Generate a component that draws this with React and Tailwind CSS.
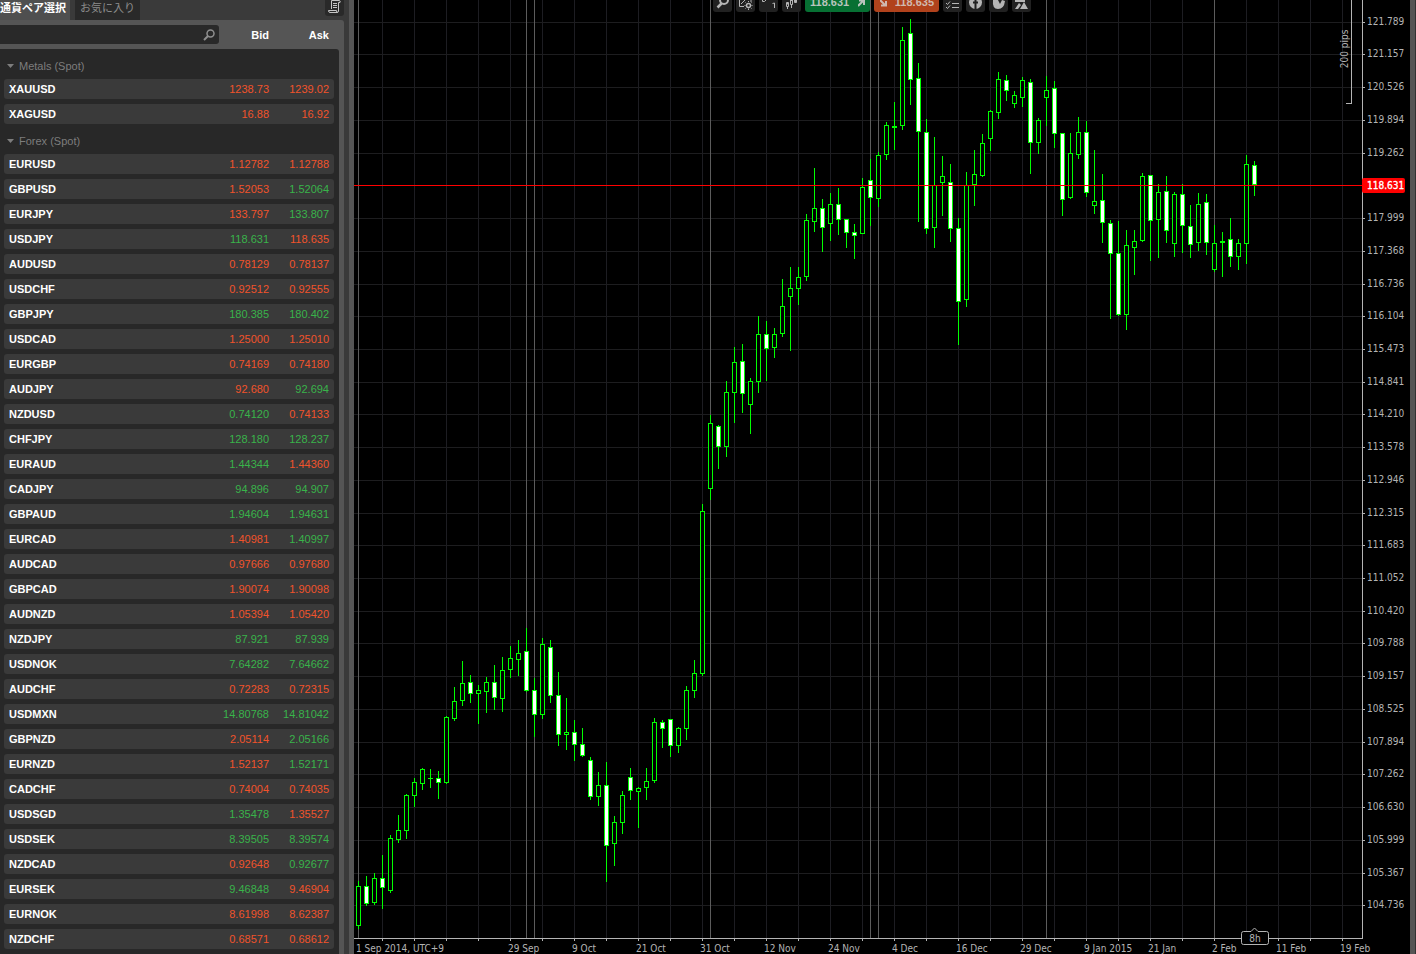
import { useState } from 'react'

const METALS = [
  ['XAUUSD', '1238.73', 'down', '1239.02', 'down'],
  ['XAGUSD', '16.88', 'down', '16.92', 'down'],
]

const FOREX = [
  ['EURUSD', '1.12782', 'down', '1.12788', 'down'],
  ['GBPUSD', '1.52053', 'down', '1.52064', 'up'],
  ['EURJPY', '133.797', 'down', '133.807', 'up'],
  ['USDJPY', '118.631', 'up', '118.635', 'down'],
  ['AUDUSD', '0.78129', 'down', '0.78137', 'down'],
  ['USDCHF', '0.92512', 'down', '0.92555', 'down'],
  ['GBPJPY', '180.385', 'up', '180.402', 'up'],
  ['USDCAD', '1.25000', 'down', '1.25010', 'down'],
  ['EURGBP', '0.74169', 'down', '0.74180', 'down'],
  ['AUDJPY', '92.680', 'down', '92.694', 'up'],
  ['NZDUSD', '0.74120', 'up', '0.74133', 'down'],
  ['CHFJPY', '128.180', 'up', '128.237', 'up'],
  ['EURAUD', '1.44344', 'up', '1.44360', 'down'],
  ['CADJPY', '94.896', 'up', '94.907', 'up'],
  ['GBPAUD', '1.94604', 'up', '1.94631', 'up'],
  ['EURCAD', '1.40981', 'down', '1.40997', 'up'],
  ['AUDCAD', '0.97666', 'down', '0.97680', 'down'],
  ['GBPCAD', '1.90074', 'down', '1.90098', 'down'],
  ['AUDNZD', '1.05394', 'down', '1.05420', 'down'],
  ['NZDJPY', '87.921', 'up', '87.939', 'up'],
  ['USDNOK', '7.64282', 'up', '7.64662', 'up'],
  ['AUDCHF', '0.72283', 'down', '0.72315', 'down'],
  ['USDMXN', '14.80768', 'up', '14.81042', 'up'],
  ['GBPNZD', '2.05114', 'down', '2.05166', 'up'],
  ['EURNZD', '1.52137', 'down', '1.52171', 'up'],
  ['CADCHF', '0.74004', 'down', '0.74035', 'down'],
  ['USDSGD', '1.35478', 'up', '1.35527', 'down'],
  ['USDSEK', '8.39505', 'up', '8.39574', 'up'],
  ['NZDCAD', '0.92648', 'down', '0.92677', 'up'],
  ['EURSEK', '9.46848', 'up', '9.46904', 'down'],
  ['EURNOK', '8.61998', 'down', '8.62387', 'down'],
  ['NZDCHF', '0.68571', 'down', '0.68612', 'down'],
]

// high, body top, body bottom, low, falling (1 = filled body)
const CANDLES = [
  [881, 886, 926, 929, 0], [876, 886, 904, 906, 1], [873, 878, 903, 905, 0], [855, 878, 888, 909, 1],
  [835, 838, 891, 893, 0], [815, 830, 840, 843, 0], [794, 795, 831, 839, 0], [778, 782, 796, 807, 0],
  [768, 769, 784, 790, 0], [769, 778, 779, 788, 0], [771, 778, 783, 799, 1], [716, 717, 783, 784, 0],
  [687, 701, 719, 721, 0], [661, 683, 701, 706, 0], [675, 682, 694, 703, 1], [685, 690, 694, 724, 0],
  [677, 682, 692, 713, 0], [665, 682, 698, 710, 1], [657, 670, 699, 712, 0], [646, 658, 670, 678, 0],
  [640, 653, 660, 676, 0], [628, 651, 691, 692, 1], [678, 690, 715, 737, 1], [638, 644, 715, 719, 0],
  [640, 647, 696, 703, 1], [672, 695, 735, 746, 1], [698, 732, 735, 750, 0], [720, 732, 745, 761, 1],
  [728, 744, 756, 757, 1], [757, 760, 797, 800, 1], [772, 785, 797, 806, 0], [762, 785, 846, 882, 1],
  [816, 822, 844, 866, 0], [791, 795, 823, 834, 0], [768, 777, 791, 800, 1], [787, 788, 792, 828, 0],
  [768, 781, 788, 800, 0], [718, 722, 781, 783, 0], [720, 722, 729, 748, 1], [719, 719, 746, 757, 1],
  [727, 728, 746, 753, 0], [686, 690, 729, 740, 0], [660, 673, 691, 698, 0], [504, 511, 674, 676, 0],
  [415, 423, 489, 500, 0], [425, 426, 447, 469, 1], [381, 392, 447, 457, 0], [347, 362, 393, 423, 0],
  [344, 361, 394, 413, 1], [378, 381, 405, 434, 0], [316, 334, 382, 393, 0], [321, 334, 349, 381, 1],
  [328, 334, 348, 358, 0], [279, 306, 334, 337, 0], [267, 288, 297, 351, 0], [267, 277, 289, 305, 0],
  [214, 220, 277, 281, 0], [168, 208, 222, 232, 0], [199, 208, 228, 252, 1], [193, 204, 224, 241, 0],
  [188, 204, 220, 235, 1], [219, 219, 233, 248, 1], [224, 232, 236, 259, 1], [178, 187, 234, 234, 0],
  [159, 180, 198, 226, 1], [152, 155, 199, 207, 0], [122, 125, 155, 160, 0], [102, 126, 128, 150, 0],
  [27, 40, 126, 130, 0], [19, 33, 80, 105, 1], [63, 78, 132, 222, 1], [119, 132, 229, 234, 1],
  [137, 185, 228, 248, 0], [156, 176, 183, 216, 0], [164, 182, 229, 242, 1], [218, 228, 302, 345, 1],
  [172, 185, 300, 307, 0], [150, 174, 185, 206, 0], [134, 143, 176, 177, 0], [110, 111, 139, 151, 0],
  [72, 79, 113, 119, 0], [75, 80, 91, 101, 1], [91, 95, 104, 108, 0], [77, 80, 98, 107, 0],
  [79, 82, 143, 174, 1], [118, 120, 143, 154, 0], [76, 90, 98, 126, 0], [81, 88, 134, 148, 1],
  [133, 133, 200, 216, 1], [133, 153, 198, 199, 0], [117, 132, 155, 159, 0], [121, 132, 193, 197, 1],
  [150, 201, 206, 214, 0], [174, 200, 223, 243, 1], [220, 223, 254, 319, 1], [221, 253, 315, 316, 1],
  [230, 245, 315, 330, 0], [230, 241, 248, 275, 0], [173, 176, 241, 242, 0], [175, 175, 221, 261, 1],
  [184, 192, 220, 258, 0], [176, 191, 231, 243, 1], [192, 194, 244, 257, 0], [184, 194, 226, 253, 1],
  [205, 226, 245, 258, 1], [193, 204, 243, 251, 0], [194, 202, 243, 255, 1], [225, 243, 270, 272, 0],
  [232, 241, 243, 277, 0], [218, 239, 257, 267, 1], [239, 243, 257, 270, 0], [155, 164, 244, 264, 0],
  [161, 165, 185, 196, 1],
]

const PRICES = [
  [22, '121.789'], [54, '121.157'], [87, '120.526'], [120, '119.894'], [153, '119.262'],
  [218, '117.999'], [251, '117.368'], [284, '116.736'], [316, '116.104'], [349, '115.473'],
  [382, '114.841'], [414, '114.210'], [447, '113.578'], [480, '112.946'], [513, '112.315'],
  [545, '111.683'], [578, '111.052'], [611, '110.420'], [643, '109.788'], [676, '109.157'],
  [709, '108.525'], [742, '107.894'], [774, '107.262'], [807, '106.630'], [840, '105.999'],
  [873, '105.367'], [905, '104.736'],
]

const DATES = [
  '29 Sep', '9 Oct', '21 Oct', '31 Oct', '12 Nov', '24 Nov', '4 Dec', '16 Dec',
  '29 Dec', '9 Jan 2015', '21 Jan', '2 Feb', '11 Feb', '19 Feb',
]

const GRID_X = Array.from({ length: 31 }, (_, i) => 28 + i * 32)
const PERIOD_X = [4, 172, 180, 356, 516, 524, 692, 860]
const AXIS_X = 1008
const AXIS_Y = 938

function Price({ value, dir }) {
  return <span className={dir === 'up' ? 'text-[#39b34a]' : 'text-[#f1532b]'}>{value}</span>
}

function GroupRow({ title, open, onToggle }) {
  return (
    <tr>
      <th colSpan={3} className="h-5 p-0 text-left font-normal">
        <button
          type="button"
          aria-expanded={open}
          onClick={onToggle}
          className="flex h-5 items-center gap-[5px] pt-1 pl-[3px] text-[#7d7d7d]"
        >
          <svg width="7" height="4" viewBox="0 0 7 4" fill="currentColor">
            <path d="M0 0h7L3.5 4z" />
          </svg>
          {title}
        </button>
      </th>
    </tr>
  )
}

function SymbolRows({ rows }) {
  return rows.map(([name, bid, bidDir, ask, askDir]) => (
    <tr key={name}>
      <th scope="row" className="h-5 rounded-l-[3px] bg-[#3a3a3a] p-0 pl-[5px] text-left font-bold text-white">
        {name}
      </th>
      <td className="w-20 bg-[#3a3a3a] p-0 text-right">
        <Price value={bid} dir={bidDir} />
      </td>
      <td className="w-[65px] rounded-r-[3px] bg-[#3a3a3a] p-0 pr-[5px] text-right">
        <Price value={ask} dir={askDir} />
      </td>
    </tr>
  ))
}

function SymbolPanel() {
  const [query, setQuery] = useState('')
  const [metalsOpen, setMetalsOpen] = useState(true)
  const [forexOpen, setForexOpen] = useState(true)
  const match = ([name]) => name.includes(query.toUpperCase())

  return (
    <aside className="flex w-[354px] shrink-0 flex-col border-r-[5px] border-[#555555] bg-[#3a3a3a] pr-[5px] text-[11px] leading-4">
      <div className="flex h-5 items-start gap-[5px] whitespace-nowrap font-['Liberation_Sans','Noto_Sans_CJK_JP',sans-serif]">
        <button type="button" className="flex h-5 w-[70px] items-start bg-[#4f4f4f] font-bold text-white">
          通貨ペア選択
        </button>
        <button type="button" className="flex h-5 w-[65px] items-start justify-center bg-[#292929] text-[#8c8c8c]">
          お気に入り
        </button>
        <button
          type="button"
          aria-label="Symbol info"
          className="ml-auto flex h-4 w-[19px] justify-center rounded-b-[3px] bg-[#292929]"
        >
          <svg width="13" height="14" viewBox="0 0 13 14" fill="none" stroke="#c4c4c4">
            <path d="M3.500 9V0.500H11.500Q12.500 0.500 12 2.500H10.500V11Q10.500 12.500 9 12.500H2Q0.500 12.500 0.500 10.500H8.500Q8.500 12.500 9.500 12.500" />
            <path d="M5 3.500h4M5 5.500h4M5 7.500h4" />
          </svg>
        </button>
      </div>

      <div className="flex grow flex-col rounded-tr-[3px] bg-[#555555] pt-[5px] pr-[5px]">
        <div className="flex h-[19px] items-center font-bold text-white">
          <label className="flex h-[19px] grow items-center rounded-r-[3px] bg-[#292929] pr-1">
            <input
              type="text"
              aria-label="Search"
              value={query}
              onChange={(e) => setQuery(e.target.value)}
              className="w-0 grow bg-transparent px-1 font-normal outline-none"
            />
            <svg width="12" height="12" viewBox="0 0 12 12" fill="none" stroke="#8f8f8f">
              <circle cx="7.500" cy="4.500" r="3.500" strokeWidth="1.500" />
              <path d="M5 7L1 11" strokeWidth="2" />
            </svg>
          </label>
          <span className="w-[50px] text-right">Bid</span>
          <span className="w-[60px] pr-0 text-right">Ask</span>
          <span className="w-[10px]" />
        </div>

        <div className="mt-[5px] grow rounded-tr-[3px] bg-[#282828] pr-[5px] pl-1">
          <table
            aria-label="Symbols"
            className="w-full border-separate border-spacing-x-0 border-spacing-y-[5px] font-['Liberation_Sans',Arial,sans-serif]"
          >
            <tbody>
              <GroupRow title="Metals (Spot)" open={metalsOpen} onToggle={() => setMetalsOpen(!metalsOpen)} />
              {metalsOpen && <SymbolRows rows={METALS.filter(match)} />}
              <GroupRow title="Forex (Spot)" open={forexOpen} onToggle={() => setForexOpen(!forexOpen)} />
              {forexOpen && <SymbolRows rows={FOREX.filter(match)} />}
            </tbody>
          </table>
        </div>
      </div>
    </aside>
  )
}

function Candle({ x, data }) {
  const [high, top, bottom, low, falling] = data
  const height = bottom - top
  return (
    <g>
      <rect x={x} y={high} width="1" height={low - high} fill="#00ff00" />
      <rect x={x - 2} y={top} width="5" height={height} fill="#00ff00" />
      {height > 2 && (
        <rect x={x - 1} y={top + 1} width="3" height={height - 2} fill={falling ? '#ffffff' : '#000000'} />
      )}
    </g>
  )
}

function Chart() {
  return (
    <svg
      viewBox="0 0 1056 954"
      role="img"
      aria-label="USDJPY daily chart"
      className="block w-full font-['DejaVu_Sans_Condensed','Noto_Sans',sans-serif] text-[10px]"
    >
      <g shapeRendering="crispEdges">
        {GRID_X.map((x) => (
          <rect key={x} x={x} y="0" width="1" height={AXIS_Y} fill="#1d1d22" />
        ))}
        {PRICES.map(([y]) => (
          <rect key={y} x="0" y={y} width={AXIS_X} height="1" fill="#1d1d1f" />
        ))}
        {PERIOD_X.map((x) => (
          <rect key={x} x={x} y="0" width="1" height={AXIS_Y} fill="#5c5c5c" />
        ))}
        {CANDLES.map((c, i) => (
          <Candle key={i} x={4 + i * 8} data={c} />
        ))}

        {/* axes */}
        <g fill="#b4b4b4">
          <rect x="0" y={AXIS_Y} width={AXIS_X + 1} height="1" />
          <rect x={AXIS_X} y="0" width="1" height={AXIS_Y + 1} />
          {GRID_X.map((x) => (
            <rect key={x} x={x} y={AXIS_Y} width="1" height="3" />
          ))}
          {PRICES.map(([y]) => (
            <rect key={y} x={AXIS_X} y={y} width="3" height="1" />
          ))}
          <rect x="997" y="0" width="1" height="104" />
          <rect x="992" y="103" width="6" height="1" />
        </g>
        <rect x="0" y="185" width={AXIS_X} height="1" fill="#ff0000" />
      </g>

      <g fill="#b4b4b4">
        {PRICES.map(([y, label]) => (
          <text key={label} x="1013" y={y + 3}>{label}</text>
        ))}
        <text x="2" y="952">1 Sep 2014, UTC+9</text>
        {DATES.map((label, i) => (
          <text key={label} x={154 + i * 64} y="952">{label}</text>
        ))}
        <text transform="translate(994 49) rotate(-90)" textAnchor="middle">200 pips</text>
      </g>

      <rect x="1008" y="178" width="43" height="15" rx="2" fill="#ff0000" />
      <text x="1013" y="189" fill="#ffffff" stroke="#ffffff" strokeWidth="0.300">118.631</text>

      <path
        d="M889.500 931.500H897L900.500 928L904 931.500H912.500Q914.500 931.500 914.500 933.500V942.500Q914.500 944.500 912.500 944.500H889.500Q887.500 944.500 887.500 942.500V933.500Q887.500 931.500 889.500 931.500Z"
        fill="#000000"
        stroke="#b4b4b4"
      />
      <text x="901" y="942" textAnchor="middle" fill="#b4b4b4">8h</text>
    </svg>
  )
}

function ToolButton({ label, children }) {
  return (
    <button type="button" aria-label={label} className="h-3 w-[19px] rounded-b-[3px] bg-[#212121]">
      <svg width="19" height="12" viewBox="0 0 19 12" fill="none" stroke="#b5b5b5" className="block">
        {children}
      </svg>
    </button>
  )
}

function Toolbar() {
  return (
    <div className="absolute top-0 left-[359px] flex gap-1 font-['Liberation_Sans',Arial,sans-serif]">
      <ToolButton label="Zoom">
        <circle cx="11" cy="0" r="4" strokeWidth="2" />
        <path d="M8.500 3.500L4.500 7.500" strokeWidth="2.500" />
      </ToolButton>
      <ToolButton label="Chart settings">
        <path d="M3.500 0V6.500H8M5 4L9 0M15 0v2" />
        <circle cx="12.500" cy="5.500" r="2" strokeWidth="1.500" />
        <path d="M12.500 2V1M12.500 10V8.500M9.500 5.500H8.500M16.500 5.500H15.500M10 3L9.500 2.500M15 3L15.500 2.500M10 8L9.500 8.500M15 8L15.500 8.500" />
      </ToolButton>
      <ToolButton label="Timeframe D1">
        <path d="M3.500 0V1.500H5.500L7 0M13.500 3.500L15.500 3V8" />
      </ToolButton>
      <ToolButton label="Chart type">
        <path d="M5.500 2V4.500M5.500 7V9M9.500 0V1M9.500 5V8M13.500 0V3" />
        <path d="M4.500 2.500h2v4h-2zM8.500 0v4.500h2V0M12.500 0v2.500h2V0" />
      </ToolButton>
      <button
        type="button"
        className="flex h-3 w-[65px] items-start justify-between overflow-hidden rounded-b-[3px] bg-[#077033] pr-[5px] pl-[5px] text-[11px] leading-[5px] font-bold text-[#b9c4bd]"
      >
        118.631
        <svg width="7" height="7" viewBox="0 0 7 7" fill="none" stroke="currentColor" strokeWidth="2">
          <path d="M0 6L5 1M1 0.500H6V5" />
        </svg>
      </button>
      <button
        type="button"
        className="flex h-3 w-[65px] items-start justify-between overflow-hidden rounded-b-[3px] bg-[#b1421c] pr-[5px] pl-[6px] text-[11px] leading-[5px] font-bold text-[#d0b9b0]"
      >
        <svg width="7" height="7" viewBox="0 0 7 7" fill="none" stroke="currentColor" strokeWidth="2">
          <path d="M0 0L5 5M6 1V5.500H1" />
        </svg>
        118.635
      </button>
      <ToolButton label="Orders">
        <path d="M3 3L4.500 4.500L7 1.500M3 7L4.500 8.500L7 5.500M9 3.500h7M9 7.500h7" />
      </ToolButton>
      <ToolButton label="Facebook">
        <circle cx="9.500" cy="2.500" r="6.500" fill="#b5b5b5" stroke="none" />
        <path d="M9.500 9V0M7 2.500H12" stroke="#212121" strokeWidth="2" />
      </ToolButton>
      <ToolButton label="Twitter">
        <path d="M4 0Q3 9 9 9Q15 9 16 1L13 0L11 4L9 0Z" fill="#b5b5b5" stroke="none" />
      </ToolButton>
      <ToolButton label="Snapshot">
        <path d="M3 0H13V2H3zM3 9L7 3L9 5L6 9zM8 9L12 2L16 9z" fill="#b5b5b5" stroke="none" />
      </ToolButton>
    </div>
  )
}

export default function App() {
  return (
    <div className="flex min-h-screen overflow-hidden bg-black font-['Liberation_Sans',Arial,sans-serif]">
      <SymbolPanel />
      <main className="relative min-w-0 flex-1">
        <Chart />
        <Toolbar />
      </main>
      <div className="w-1.5 shrink-0 border-r border-[#333333] bg-[#555555]" />
    </div>
  )
}
